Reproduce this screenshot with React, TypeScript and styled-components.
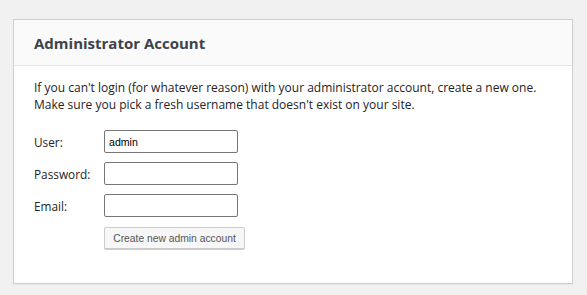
import styled, { createGlobalStyle } from 'styled-components';

const GlobalStyle = createGlobalStyle`
  html, body {
    margin: 0;
    padding: 0;
    background: #f1f1f1;
  }
  body {
    font-family: 'Open Sans', 'Noto Sans', sans-serif;
    color: #32373c;
  }
`;

const Page = styled.div`
  padding: 19px 15px 13px 13px;
`;

const Card = styled.section`
  width: 560px;
  box-sizing: border-box;
  background: #fff;
  border: 1px solid #ccd0d4;
  box-shadow: 0 1px 1px rgba(0, 0, 0, 0.04);
`;

const CardHeader = styled.header`
  height: 45px;
  display: flex;
  align-items: center;
  padding: 0 20px;
  background: #fafafa;
  border-bottom: 1px solid #e5e5e5;
`;

const Title = styled.h2`
  margin: 0;
  font-size: 15px;
  font-weight: 700;
  color: #3c434a;
`;

const CardBody = styled.div`
  padding: 13px 20px 34px 20px;
`;

const Intro = styled.p`
  margin: 0 0 17px 0;
  font-size: 12px;
  line-height: 17px;
  color: #1d2327;
  white-space: nowrap;
`;

const Form = styled.form`
  display: flex;
  flex-direction: column;
  gap: 9px;
`;

const Row = styled.div`
  display: flex;
  align-items: center;
`;

const Label = styled.label`
  width: 70px;
  font-size: 11.8px;
  color: #1d2327;
`;

const Input = styled.input`
  width: 134px;
  height: 23px;
  box-sizing: border-box;
  margin: 0;
  padding: 0 4px;
  border: 1px solid #767676;
  border-radius: 2px;
  font-family: 'Liberation Sans', Arial, sans-serif;
  font-size: 10.6px;
  color: #000;
  background: #fff;
`;

const Button = styled.button`
  margin: 1px 0 0 70px;
  width: 141px;
  height: 22px;
  box-sizing: border-box;
  padding: 0;
  border: 1px solid #ccc;
  border-radius: 2px;
  background: #f7f7f7;
  box-shadow: 0 1px 0 #ccc;
  font-family: 'Liberation Sans', Arial, sans-serif;
  font-size: 10.3px;
  color: #555;
`;

export default function App() {
  return (
    <Page>
      <GlobalStyle />
      <Card>
        <CardHeader>
          <Title>Administrator Account</Title>
        </CardHeader>
        <CardBody>
          <Intro>
            If you can't login (for whatever reason) with your administrator account, create a new one.
            <br />
            Make sure you pick a fresh username that doesn't exist on your site.
          </Intro>
          <Form onSubmit={e => e.preventDefault()}>
            <Row>
              <Label>User:</Label>
              <Input type="text" defaultValue="admin" />
            </Row>
            <Row>
              <Label>Password:</Label>
              <Input type="password" />
            </Row>
            <Row>
              <Label>Email:</Label>
              <Input type="text" />
            </Row>
            <Row>
              <Button type="button">Create new admin account</Button>
            </Row>
          </Form>
        </CardBody>
      </Card>
    </Page>
  );
}
